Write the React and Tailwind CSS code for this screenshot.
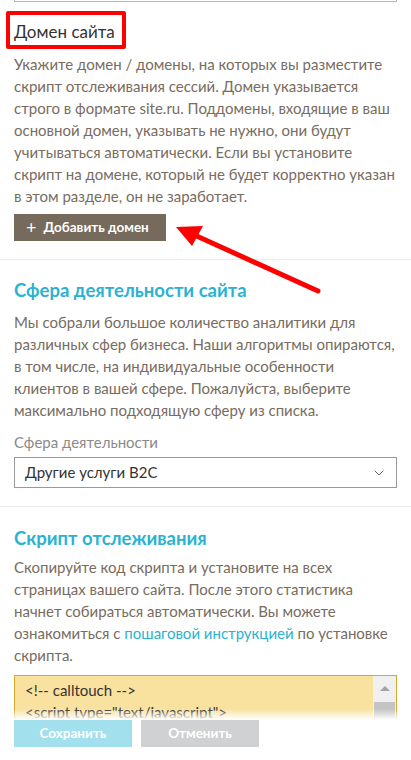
import { ChevronDown } from "lucide-react";

const font = { fontFamily: 'Lato, "Open Sans", sans-serif' };

export default function App() {
  return (
    <div className="relative w-[411px] h-[760px] overflow-hidden bg-white text-[#786c60]" style={font}>
      {/* край поля сверху */}
      <div className="mx-[14px] h-[2px] border-x border-b border-[#b5b5b5]" />

      {/* Домен сайта */}
      <div className="px-[14px] pt-[19px] pb-[18px]">
        <div className="relative">
          <h3 className="text-[17px] leading-[22px] text-[#333]">Домен сайта</h3>
          <div className="absolute -left-[8px] -top-[10px] w-[120px] h-[38px] border-[4px] border-[#ff0000] rounded-[2px]" />
        </div>
        <p className="mt-[10px] text-[15px] leading-[22px]">
          Укажите домен / домены, на которых вы разместите скрипт отслеживания сессий. Домен указывается строго в формате site.ru. Поддомены, входящие в ваш основной домен, указывать не нужно, они будут учитываться автоматически. Если вы установите скрипт на домене, который не будет корректно указан в этом разделе, он не заработает.
        </p>
        <button className="mt-[7px] h-[27px] w-[152px] flex items-center gap-[7px] pl-[12px] bg-[#766a5d] text-white text-[13.5px] font-bold">
          <span className="text-[18px] leading-none font-normal -mt-[2px]">+</span>
          Добавить домен
        </button>
      </div>

      <div className="border-t border-[#ececec]" />

      {/* Сфера деятельности */}
      <div className="px-[14px] pt-[18px] pb-[18px]">
        <h3 className="text-[18.5px] leading-[24px] font-bold text-[#2ab3d1]">Сфера деятельности сайта</h3>
        <p className="mt-[9px] text-[15px] leading-[22px]">
          Мы собрали большое количество аналитики для различных сфер бизнеса. Наши алгоритмы опираются, в том числе, на индивидуальные особенности клиентов в вашей сфере. Пожалуйста, выберите максимально подходящую сферу из списка.
        </p>
        <div className="mt-[11px] text-[15px] leading-[20px] text-[#8a8a8a]">Сфера деятельности</div>
        <div className="mt-[5px] h-[31px] border border-[#9a9a9a] flex items-center justify-between pl-[10px] pr-[9px]">
          <span className="text-[15px] text-[#333]">Другие услуги B2C</span>
          <ChevronDown size={16} strokeWidth={1.5} className="text-[#666]" />
        </div>
      </div>

      <div className="border-t border-[#ececec]" />

      {/* Скрипт отслеживания */}
      <div className="px-[14px] pt-[19px]">
        <h3 className="text-[18.5px] leading-[24px] font-bold text-[#2ab3d1]">Скрипт отслеживания</h3>
        <p className="mt-[6px] text-[15px] leading-[22px]">
          Скопируйте код скрипта и установите на всех страницах вашего сайта. После этого статистика начнет собираться автоматически. Вы можете ознакомиться с <span className="text-[#2ab3d1]">пошаговой инструкцией</span> по установке скрипта.
        </p>
        <div className="mt-[9px] h-[80px] border border-[#d9a72a] bg-[#f9e2a0] flex">
          <div className="flex-1 pl-[10px] pt-[3px] text-[15px] leading-[22px] text-[#333]">
            <div>&lt;!-- calltouch --&gt;</div>
            <div>&lt;script type="text/javascript"&gt;</div>
          </div>
          <div className="w-[23px] bg-[#f0f0f0] flex flex-col items-center pt-[10px]">
            <div className="w-0 h-0 border-x-[5px] border-x-transparent border-b-[5px] border-b-[#a3a3a3]" />
            <div className="mt-[11px] w-[21px] flex-1 bg-[#c4c4c4]" />
          </div>
        </div>
      </div>

      {/* нижняя панель */}
      <div className="absolute left-0 right-0 bottom-0 h-[60px] bg-gradient-to-b from-white/0 from-[15%] to-white to-[33%]">
        <div className="absolute left-[14px] top-[20px] flex gap-[9px]">
          <button className="w-[118px] h-[27px] bg-[#a2e0ee] text-white text-[13.5px] font-bold">Сохранить</button>
          <button className="w-[118px] h-[27px] bg-[#cfd1d3] text-white text-[13.5px] font-bold">Отменить</button>
        </div>
      </div>

      {/* стрелка */}
      <svg className="absolute left-0 top-0 pointer-events-none" width="411" height="760">
        <line x1="318" y1="291" x2="190" y2="233" stroke="#ff0000" strokeWidth="5" strokeLinecap="round" />
        <polygon points="176,227 203,226 192,246" fill="#ff0000" />
      </svg>
    </div>
  );
}
